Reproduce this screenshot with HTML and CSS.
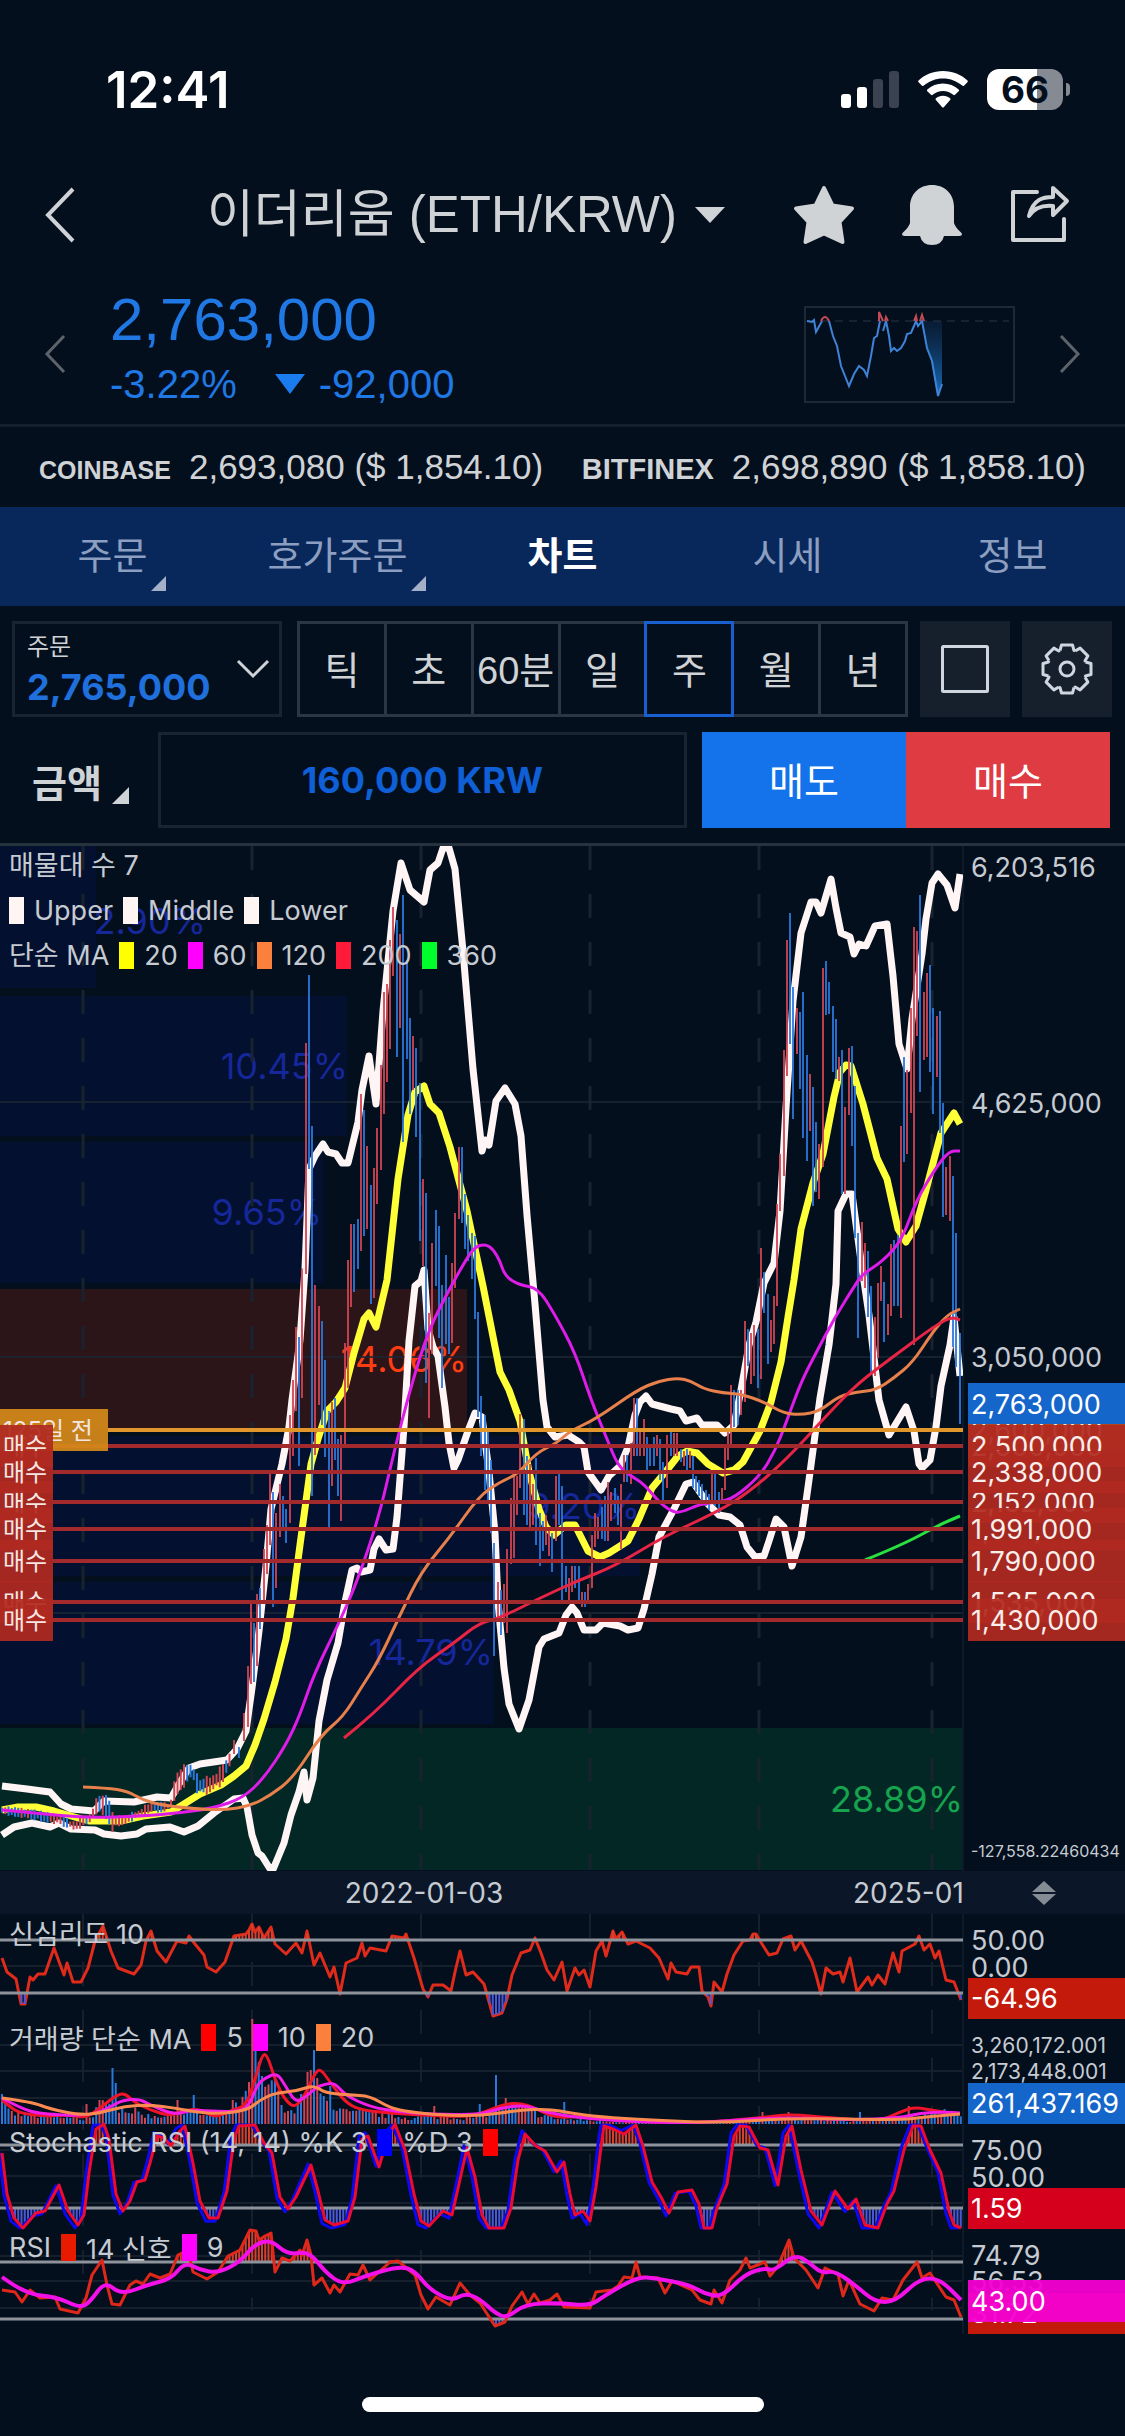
FILE: index.html
```html
<!DOCTYPE html>
<html lang="ko">
<head>
    <meta charset="UTF-8">
    <meta name="viewport" content="width=device-width, initial-scale=1.0">
    <title>이더리움 (ETH/KRW)</title>
    <link rel="stylesheet" href="styles.css">
</head>
<body>
    <div class="status-bar">
        <span class="clock">12:41</span>
        <div class="status-icons">
            <svg width="58" height="37" viewBox="0 0 58 37">
                <rect x="0" y="23" width="10" height="14" rx="3" fill="#fff"/>
                <rect x="16" y="16" width="10" height="21" rx="3" fill="#fff"/>
                <rect x="32" y="8" width="10" height="29" rx="3" fill="#3b4350"/>
                <rect x="48" y="0" width="10" height="37" rx="3" fill="#3b4350"/>
            </svg>
            <svg width="50" height="37" viewBox="0 0 50 37" fill="#fff">
                <path d="M25 0C15.500 0 6.500 3.700 .5 9.500Q-.2 10.400.6 11.300L4 14.700Q5 15.400 5.900 14.600C11 10 17.500 7.400 25 7.400S39 10 44.100 14.600Q45 15.400 46 14.700L49.400 11.300Q50.200 10.400 49.500 9.500C43.500 3.700 34.500 0 25 0Z"/>
                <path d="M25 12.500C19 12.500 13.500 14.800 9.300 18.400Q8.500 19.300 9.300 20.200L13 23.800Q13.900 24.500 14.800 23.800C17.600 21.400 21 19.900 25 19.900S32.400 21.400 35.200 23.800Q36.100 24.500 37 23.800L40.700 20.200Q41.500 19.300 40.700 18.400C36.500 14.800 31 12.500 25 12.500Z"/>
                <path d="M25 24.800C22.200 24.800 19.800 25.800 17.900 27.300Q17 28.200 17.900 29.100L24 35.900Q25 36.900 26 35.900L32.100 29.100Q33 28.200 32.100 27.300C30.200 25.800 27.800 24.800 25 24.800Z"/>
            </svg>
            <div class="battery">66</div>
        </div>
    </div>

    <header class="title-bar">
        <button class="icon-btn" aria-label="뒤로">
            <svg width="32" height="58" viewBox="0 0 32 58"><path d="M29 3L4 29L29 55" fill="none" stroke="#d0d3d6" stroke-width="4"/></svg>
        </button>
        <h1 class="pair">이더리움 (ETH/KRW)<svg width="30" height="16" viewBox="0 0 30 16"><path d="M0 0H30L15 16Z" fill="#d0d3d6"/></svg></h1>
        <div class="title-actions">
            <button class="icon-btn" aria-label="즐겨찾기">
                <svg width="62" height="60" viewBox="0 0 62 60"><path d="M31 3L39.500 20.500L59 23.500L46.500 37L49.500 57L31 48.500L12.500 57L15.500 37L3 23.500L22.500 20.500Z" fill="#d0d3d6" stroke="#d0d3d6" stroke-width="4" stroke-linejoin="round"/></svg>
            </button>
            <button class="icon-btn" aria-label="알림">
                <svg width="62" height="60" viewBox="0 0 62 60"><path d="M31 0C44 0 53 9 53 22V38Q54 42 60.500 48Q62 51 58 51H43Q41 60 31 60T19 51H4Q0 51 1.500 48Q8 42 9 38V22C9 9 18 0 31 0Z" fill="#d0d3d6"/></svg>
            </button>
            <button class="icon-btn" aria-label="공유">
                <svg width="62" height="60" viewBox="0 0 62 60" fill="none" stroke="#d0d3d6" stroke-width="4" stroke-linejoin="round" stroke-linecap="round"><path d="M28 7H4V55H55V34"/><path d="M20 31C24 14 34 12 44 12V3L58 16L44 30V21C34 20 26 22 20 31Z"/></svg>
            </button>
        </div>
    </header>

    <section class="quote">
        <button class="icon-btn" aria-label="이전">
            <svg width="22" height="40" viewBox="0 0 22 40"><path d="M20 2L3 20L20 38" fill="none" stroke="#5d636b" stroke-width="3"/></svg>
        </button>
        <div class="quote-text">
            <div class="price">2,763,000</div>
            <div class="change">
                <span>-3.22%</span>
                <svg width="30" height="20" viewBox="0 0 30 20"><path d="M0 0H30L15 20Z" fill="#1b7cf0"/></svg>
                <span>-92,000</span>
            </div>
        </div>
        <svg class="mini-chart" width="211" height="97" viewBox="0 0 211 97" fill="none">
            <defs>
                <linearGradient id="drop" x1="0" y1="0" x2="0" y2="1">
                    <stop offset="0" stop-color="#123a66" stop-opacity=".3"/>
                    <stop offset="1" stop-color="#1670c0"/>
                </linearGradient>
            </defs>
            <rect x="1" y="1" width="209" height="95" stroke="#1d2937" stroke-width="2"/>
            <path d="M3 15H205" stroke="#2a3643" stroke-width="1" stroke-dasharray="8 6"/>
            <path d="M118 15H138V78L134 90L128 56L123 44Z" fill="url(#drop)"/>
            <path d="M3 15L8 16L10 14L12 26L18 15M25 15L29 30L33 40L37 60L41 70L45 80L50 68L55 60L60 64L63 70L67 50L70 32L73 30L76 15M79 25L82 15L85 30L87 45L90 42L93 45L97 42L101 35L103 28L107 27L110 20L112 15L114 20L118 15L123 42L128 55L134 90L138 78" stroke="#3f83d6" stroke-width="2"/>
            <path d="M17 15Q21 7 25 15M75 15L75 6L79 15M81 15L82 11L84 15M110 15L112 10L113 15M116 15L118 9L120 15" stroke="#c14a55" stroke-width="2"/>
        </svg>
        <button class="icon-btn" aria-label="다음">
            <svg width="22" height="40" viewBox="0 0 22 40"><path d="M2 2L19 20L2 38" fill="none" stroke="#5d636b" stroke-width="3"/></svg>
        </button>
    </section>

    <section class="exchanges">
        <div class="exchange"><strong class="ex-small">COINBASE</strong><span>2,693,080 ($ 1,854.10)</span></div>
        <div class="exchange"><strong class="ex-large">BITFINEX</strong><span>2,698,890 ($ 1,858.10)</span></div>
    </section>

    <nav class="tabs">
        <a class="tab more" href="#order">주문</a>
        <a class="tab more" href="#book">호가주문</a>
        <a class="tab active" href="#chart">차트</a>
        <a class="tab" href="#market">시세</a>
        <a class="tab" href="#info">정보</a>
    </nav>

    <section class="controls">
        <div class="control-row">
            <div class="order-box">
                <div class="order-field">
                    <label for="order-price">주문</label>
                    <select id="order-price"><option>2,765,000</option></select>
                </div>
                <svg width="34" height="20" viewBox="0 0 34 20"><path d="M2 2L17 17L32 2" fill="none" stroke="#d0d3d6" stroke-width="3"/></svg>
            </div>
            <div class="periods">
                <button>틱</button>
                <button>초</button>
                <button>60분</button>
                <button>일</button>
                <button class="active">주</button>
                <button>월</button>
                <button>년</button>
            </div>
            <button class="tool-btn" aria-label="전체 화면">
                <svg width="48" height="48" viewBox="0 0 48 48"><rect x="1.500" y="1.500" width="45" height="45" rx="1" fill="none" stroke="#d0d6e0" stroke-width="3"/></svg>
            </button>
            <button class="tool-btn" aria-label="설정">
                <svg width="52" height="52" viewBox="-26 -26 52 52" fill="none" stroke="#d0d6e0" stroke-width="3" stroke-linejoin="round">
                    <defs><path id="tooth" d="M-7 -18.500L-5.500 -24H5.500L7 -18.500L8.100 -18"/></defs>
                    <use href="#tooth"/>
                    <use href="#tooth" transform="rotate(45)"/>
                    <use href="#tooth" transform="rotate(90)"/>
                    <use href="#tooth" transform="rotate(135)"/>
                    <use href="#tooth" transform="rotate(180)"/>
                    <use href="#tooth" transform="rotate(225)"/>
                    <use href="#tooth" transform="rotate(270)"/>
                    <use href="#tooth" transform="rotate(315)"/>
                    <circle r="7"/>
                </svg>
            </button>
        </div>
        <div class="control-row amount-row">
            <label class="amount-label" for="amount">금액</label>
            <input class="amount" id="amount" type="text" value="160,000 KRW">
            <div class="trade">
                <button class="sell">매도</button>
                <button class="buy">매수</button>
            </div>
        </div>
    </section>

    <main class="chart" id="chart">
        <svg class="chart-svg" viewBox="0 846 1125 1494">
            <defs>
                <clipPath id="plot"><rect x="0" y="846" width="963" height="1494"/></clipPath>
            </defs>

            <!-- volume profile -->
            <g id="profile">
                <rect x="0" y="846" width="96" height="142" fill="#03102f"/>
                <rect x="0" y="996" width="347" height="140" fill="#03102f"/>
                <rect x="0" y="1142" width="323" height="141" fill="#03102f"/>
                <rect x="0" y="1289" width="467" height="141" fill="#2b1519"/>
                <rect x="0" y="1436" width="640" height="140" fill="#03102f"/>
                <rect x="0" y="1582" width="494" height="142" fill="#03102f"/>
                <rect x="0" y="1728" width="963" height="142" fill="#032725"/>
            </g>
            <g class="profile-text">
                <text x="206" y="934">2.90%</text>
                <text x="348" y="1079">10.45%</text>
                <text x="322" y="1225">9.65%</text>
                <text x="467" y="1372" fill="#ff3d12">14.06%</text>
                <text x="640" y="1519">9.20%</text>
                <text x="493" y="1665">14.79%</text>
                <text x="963" y="1812" fill="#16a34e">28.89%</text>
            </g>

            <g id="grid"></g>
            <path d="M963 846V2334" stroke="#0e1a29" stroke-width="2"/>
            <g id="series" clip-path="url(#plot)"></g>
            <g id="orders"></g>

            <!-- price scale -->
            <g class="scale">
                <text x="971" y="877">6,203,516</text>
                <text x="971" y="1113">4,625,000</text>
                <text x="971" y="1367">3,050,000</text>
                <text x="971" y="1857" class="tiny">-127,558.22460434</text>
            </g>
            <rect x="968" y="1383" width="157" height="41" fill="#1566cb"/>
            <text x="971" y="1414" class="tag-text">2,763,000</text>

            <!-- date scale -->
            <rect x="0" y="1871" width="1125" height="43" fill="#0b1628"/>
            <g class="scale">
                <text x="424" y="1903" text-anchor="middle" class="date">2022-01-03</text>
                <text x="853" y="1903" class="date">2025-01</text>
            </g>
            <path d="M1044 1881L1056 1892H1032ZM1044 1905L1056 1894H1032Z" fill="#868c93"/>

            <g id="indicators" clip-path="url(#plot)"></g>

            <!-- indicator scales -->
            <g class="scale">
                <text x="971" y="1950">50.00</text>
                <text x="971" y="1977">0.00</text>
                <text x="971" y="2053" class="small">3,260,172.001</text>
                <text x="971" y="2079" class="small">2,173,448.001</text>
                <text x="971" y="2160">75.00</text>
                <text x="971" y="2187">50.00</text>
                <text x="971" y="2265">74.79</text>
                <text x="971" y="2291">56.53</text>
            </g>
            <rect x="968" y="1978" width="157" height="41" fill="#c41a0c"/>
            <rect x="968" y="2083" width="157" height="41" fill="#1566cb"/>
            <rect x="968" y="2188" width="157" height="41" fill="#d4001c"/>
            <rect x="968" y="2293" width="157" height="41" fill="#c41a0c"/>
            <text x="971" y="2323" class="tag-text">31.72</text>
            <rect x="968" y="2280" width="157" height="42" fill="#f400d2" fill-opacity=".95"/>
            <g class="tag-text">
                <text x="971" y="2008">-64.96</text>
                <text x="971" y="2113" class="medium">261,437.169</text>
                <text x="971" y="2218">1.59</text>
                <text x="971" y="2311">43.00</text>
            </g>
        </svg>

        <div class="legend main-legend">
            <div class="legend-row">매물대 수 7</div>
            <div class="legend-row">
                <i class="swatch white"></i>Upper
                <i class="swatch white"></i>Middle
                <i class="swatch white"></i>Lower
            </div>
            <div class="legend-row">
                단순 MA
                <i class="swatch yellow"></i>20
                <i class="swatch magenta"></i>60
                <i class="swatch orange"></i>120
                <i class="swatch crimson"></i>200
                <i class="swatch green"></i>360
            </div>
        </div>

        <div class="legend sub-legend">
            <div class="legend-row">신심리도 10</div>
            <div class="legend-row">
                거래량 단순 MA
                <i class="swatch red"></i>5
                <i class="swatch magenta"></i>10
                <i class="swatch orange"></i>20
            </div>
            <div class="legend-row">
                Stochastic RSI (14, 14) %K 3
                <i class="swatch blue"></i>%D 3
                <i class="swatch red"></i>
            </div>
            <div class="legend-row">
                RSI
                <i class="swatch brick"></i>14 신호
                <i class="swatch magenta"></i>9
            </div>
        </div>
    </main>

    <div class="home-indicator"></div>

    <script src="script.js"></script>
</body>
</html>
```
FILE: styles.css
```css
* {
    box-sizing: border-box;
}
body {
    margin: 0;
    background-color: #040f1e;
    color: #d0d3d6;
    font-family: "Liberation Sans", "Noto Sans CJK KR", sans-serif;
}
button,
select,
input {
    font-family: inherit;
    color: inherit;
    background: none;
    border: 0;
    border-radius: 0;
    padding: 0;
    margin: 0;
}
svg {
    display: block;
}
.icon-btn {
    display: block;
}

/* status bar */
.status-bar {
    height: 178px;
    padding: 0 56px 0 106px;
    display: flex;
    align-items: center;
    justify-content: space-between;
}
.clock {
    font-family: Inter, sans-serif;
    font-size: 51px;
    font-weight: 600;
    color: #fff;
}
.status-icons {
    display: flex;
    align-items: center;
    gap: 19px;
}
.battery {
    position: relative;
    width: 76px;
    height: 41px;
    margin-right: 6px;
    border-radius: 12px;
    background: linear-gradient(to right, #fff 66%, #868b93 66%);
    color: #040f1e;
    font-family: Inter, sans-serif;
    font-size: 37px;
    font-weight: 700;
    line-height: 41px;
    text-align: center;
}
.battery::after {
    content: "";
    position: absolute;
    right: -7px;
    top: 14px;
    width: 4px;
    height: 13px;
    border-radius: 0 4px 4px 0;
    background-color: #868b93;
}

/* title bar */
.title-bar {
    height: 74px;
    padding: 0 54px 0 44px;
    display: flex;
    align-items: center;
}
.pair {
    flex: 1;
    margin: 0 68px 0 0;
    display: flex;
    align-items: center;
    justify-content: flex-end;
    gap: 18px;
    font-size: 51px;
    font-weight: 400;
    line-height: 60px;
}
.title-actions {
    display: flex;
    gap: 46px;
}

/* quote */
.quote {
    padding: 32px 44px 0;
    display: flex;
    align-items: center;
    border-bottom: 3px solid #13202e;
}
.quote-text {
    flex: 1;
    padding: 0 0 16px 44px;
    color: #1f78e4;
}
.price {
    font-size: 60px;
    line-height: 72px;
}
.change {
    display: flex;
    align-items: center;
    margin-top: 4px;
    font-size: 40px;
    line-height: 48px;
}
.change svg {
    margin: 0 14px 0 38px;
}
.mini-chart {
    margin-right: 44px;
}

/* other exchanges */
.exchanges {
    height: 80px;
    padding: 0 39px;
    display: flex;
    align-items: center;
    justify-content: space-between;
}
.exchange {
    display: flex;
    align-items: baseline;
    gap: 18px;
    font-size: 35px;
}
.ex-small {
    font-size: 25px;
}
.ex-large {
    font-size: 29px;
}

/* tabs */
.tabs {
    display: flex;
    background-color: #08285c;
}
.tab {
    position: relative;
    flex: 1;
    height: 99px;
    line-height: 99px;
    text-align: center;
    font-size: 38px;
    color: #8d9fc0;
    text-decoration: none;
}
.tab.active {
    color: #fff;
    font-weight: 700;
}
.tab.more::after {
    content: "";
    position: absolute;
    top: 69px;
    margin-left: 4px;
    border-left: 15px solid transparent;
    border-bottom: 15px solid #a3b0c8;
}

/* controls */
.controls {
    padding: 15px 13px 15px 12px;
    display: flex;
    flex-direction: column;
    gap: 15px;
}
.control-row {
    display: flex;
    height: 96px;
}
.order-box {
    width: 270px;
    padding: 0 9px 0 12px;
    display: flex;
    align-items: center;
    justify-content: space-between;
    border: 3px solid #18242f;
}
.order-field {
    display: flex;
    flex-direction: column;
}
.order-field label {
    font-size: 24px;
    line-height: 36px;
}
.order-field select {
    appearance: none;
    font-family: Inter, sans-serif;
    font-size: 36px;
    font-weight: 700;
    line-height: 44px;
    color: #1f70dc;
}
.periods {
    flex: 1;
    display: flex;
    margin: 0 12px 0 15px;
    border: 3px solid #2b3644;
}
.periods button {
    flex: 1;
    padding-bottom: 4px;
    font-size: 38px;
    white-space: nowrap;
    border-left: 3px solid #2b3644;
}
.periods button:first-child {
    border-left: 0;
}
.periods .active {
    margin: -3px -3px -3px 0;
    border: 3px solid #1a5fd0;
    position: relative;
}
.tool-btn {
    width: 90px;
    background-color: #16202d;
    display: flex;
    align-items: center;
    justify-content: center;
}
.tool-btn + .tool-btn {
    margin-left: 12px;
}
.amount-row {
    align-items: stretch;
    padding-right: 2px;
}
.amount-label {
    width: 146px;
    padding-left: 20px;
    display: flex;
    align-items: center;
    font-size: 38px;
    font-weight: 700;
}
.amount-label::after {
    content: "";
    align-self: flex-end;
    margin: 0 0 24px 10px;
    border-left: 17px solid transparent;
    border-bottom: 17px solid #d0d3d6;
}
.amount {
    flex: 1;
    min-width: 0;
    border: 3px solid #18242f;
    text-align: center;
    font-family: Inter, sans-serif;
    font-size: 36px;
    font-weight: 700;
    color: #0f5fd6;
}
.trade {
    display: flex;
    width: 408px;
    margin-left: 15px;
}
.trade button {
    flex: 1;
    padding-bottom: 4px;
    font-size: 38px;
    color: #fff;
}
.sell {
    background-color: #1473eb;
}
.buy {
    background-color: #de3b43;
}

/* chart */
.chart {
    position: relative;
    border-top: 3px solid #27323f;
    font-family: Inter, "Noto Sans CJK KR", sans-serif;
}
.chart-svg {
    width: 100%;
    height: auto;
}
.profile-text text {
    font-size: 36px;
    text-anchor: end;
}
.profile-text {
    fill: #16279a;
}
.scale {
    font-size: 27px;
    fill: #c6cbd2;
}
.scale .tiny {
    font-size: 16px;
}
.scale .small {
    font-size: 21px;
}
.scale .date {
    font-size: 28px;
}
.tag-text {
    font-size: 27px;
    fill: #fff;
}
.tag-text .medium {
    font-size: 27px;
}
.legend {
    position: absolute;
    left: 9px;
    font-size: 27px;
    color: #c6cbd2;
}
.legend-row {
    display: flex;
    align-items: center;
    gap: 10px;
    white-space: nowrap;
}
.main-legend {
    top: -3px;
}
.main-legend .legend-row {
    height: 45px;
    line-height: 45px;
}
.sub-legend {
    bottom: 40px;
}
.sub-legend .legend-row {
    height: 105px;
}
.swatch {
    width: 15px;
    height: 27px;
}
.white { background-color: #fff5f3; }
.yellow { background-color: #ffff00; }
.magenta { background-color: #ff00ff; }
.orange { background-color: #fb803c; }
.crimson { background-color: #ff1a38; }
.green { background-color: #00ff2a; }
.red { background-color: #ff0000; }
.blue { background-color: #0000ff; }
.brick { background-color: #e81a00; }

.home-indicator {
    width: 402px;
    height: 15px;
    margin: 57px auto 24px;
    border-radius: 8px;
    background-color: #fff;
}
```
FILE: script.js
```javascript
const NS = 'http://www.w3.org/2000/svg';
const grid = document.getElementById('grid');
const series = document.getElementById('series');
const orders = document.getElementById('orders');
const indicators = document.getElementById('indicators');

const UP = '#cf4552';
const DOWN = '#2a78dc';

function add(parent, name, attrs, text) {
    const el = document.createElementNS(NS, name);
    for (const key in attrs) el.setAttribute(key, attrs[key]);
    if (text) el.textContent = text;
    parent.appendChild(el);
    return el;
}

function parse(str) {
    return str.trim().split(/\s+/).map(p => p.split(',').map(Number));
}

function line(parent, points, color, width) {
    add(parent, 'polyline', {
        points: points.map(p => p.join(',')).join(' '),
        fill: 'none', stroke: color, 'stroke-width': width, 'stroke-linejoin': 'round'
    });
}

// rounded curve through the midpoints, for the averages
function curve(parent, pts, color, width) {
    let d = 'M' + pts[0];
    for (let i = 1; i < pts.length - 1; i++) {
        const mx = (pts[i][0] + pts[i + 1][0]) / 2;
        const my = (pts[i][1] + pts[i + 1][1]) / 2;
        d += 'Q' + pts[i] + ' ' + mx + ',' + my;
    }
    d += 'L' + pts[pts.length - 1];
    add(parent, 'path', { d: d, fill: 'none', stroke: color, 'stroke-width': width });
}

function valueAt(pts, x) {
    for (let i = 1; i < pts.length; i++) {
        if (x <= pts[i][0]) {
            const [x0, y0] = pts[i - 1];
            const [x1, y1] = pts[i];
            return x1 === x0 ? y1 : y0 + (y1 - y0) * (x - x0) / (x1 - x0);
        }
    }
    return pts[pts.length - 1][1];
}

let seed = 7;
function rand() {
    seed = (seed * 16807) % 2147483647;
    return seed / 2147483647;
}

// ---- grid ----
[83, 252, 421, 590, 759, 932].forEach(x => {
    add(grid, 'path', { d: `M${x} 846V1870`, stroke: '#19232f', 'stroke-width': 3, 'stroke-dasharray': '24 24' });
    add(grid, 'path', { d: `M${x} 1914V2310`, stroke: '#16202d', 'stroke-width': 2, 'stroke-dasharray': '24 24' });
});
[1102, 1357, 1613].forEach(y => add(grid, 'path', { d: `M0 ${y}H963`, stroke: '#1b2533', 'stroke-opacity': .8, 'stroke-width': 2 }));
[1966, 2045, 2071, 2098, 2150, 2176, 2203, 2256, 2281, 2308].forEach(y => add(grid, 'path', { d: `M0 ${y}H963`, stroke: '#16202d', 'stroke-width': 2 }));

// ---- bollinger bands and averages ----
const upper = parse(`2,1786 27,1789 42,1791 50,1792 61,1804 71,1809 94,1811 104,1801 134,1802 157,1797 171,1798 179,1784 189,1768
    200,1764 227,1760 237,1749 246,1731 252,1688 259,1631 266,1566 271,1509 282,1464 289,1427 292,1400 300,1340 305,1269 309,1169
    315,1156 323,1144 328,1152 336,1154 342,1163 348,1163 358,1122 362,1090 369,1056 376,1104 383,1011 393,911 401,863 410,890 424,902
    430,870 438,863 443,848 449,848 455,869 463,951 473,1069 482,1151 485,1140 489,1145 496,1101 505,1088 515,1104 521,1136 527,1215
    535,1304 543,1400 547,1427 555,1437 568,1435 579,1442 584,1447 588,1472 601,1490 609,1476 620,1466 628,1447 635,1415 640,1402
    646,1396 652,1404 671,1409 680,1411 686,1421 697,1418 702,1425 717,1425 725,1433 734,1425 741,1390 749,1345 756,1322 764,1283
    774,1263 780,1211 786,1108 793,1001 801,933 811,902 816,902 821,913 831,879 836,908 841,933 850,937 854,954 859,944 866,946
    875,926 887,924 893,976 899,1044 907,1069 912,1019 922,954 926,919 932,883 938,874 947,885 955,908 960,874`);
const lower = parse(`2,1835 14,1827 32,1823 50,1827 59,1823 71,1829 95,1830 104,1834 121,1836 137,1834 146,1829 170,1827 184,1832
    198,1826 214,1813 234,1799 243,1798 247,1807 252,1835 258,1853 262,1856 272,1872 284,1843 291,1815 299,1792 304,1772 307,1800
    313,1778 319,1721 327,1680 338,1643 345,1602 352,1570 357,1568 361,1572 370,1570 374,1549 379,1539 386,1550 393,1549 397,1517
    404,1427 409,1341 415,1286 421,1281 424,1270 428,1329 433,1347 438,1356 445,1407 449,1443 454,1468 458,1460 468,1431 475,1413
    482,1417 489,1472 495,1533 498,1602 504,1668 509,1704 519,1729 529,1700 539,1647 544,1639 559,1633 566,1615 572,1607 577,1613
    584,1630 596,1630 603,1623 620,1626 628,1630 638,1628 644,1609 652,1574 659,1537 674,1509 686,1484 693,1482 708,1504 719,1515
    730,1517 740,1525 747,1547 755,1557 764,1556 769,1541 776,1519 784,1527 792,1566 801,1537 809,1480 820,1398 829,1345 836,1284
    838,1211 846,1194 852,1194 861,1261 869,1315 879,1400 889,1435 906,1407 914,1431 919,1464 922,1468 930,1460 936,1427 941,1386
    950,1345 954,1317 960,1376`);
const ma20 = parse(`2,1810 18,1807 36,1807 54,1811 71,1816 89,1821 121,1821 143,1816 171,1812 184,1804 200,1794 221,1785 234,1776
    246,1766 255,1745 264,1719 275,1682 286,1639 293,1598 300,1545 311,1464 318,1439 327,1411 336,1402 345,1388 354,1353 364,1319
    369,1313 376,1327 387,1280 398,1179 408,1115 415,1092 424,1086 430,1104 439,1113 450,1147 467,1211 483,1286 500,1372 509,1390
    520,1421 529,1472 539,1509 546,1527 554,1535 566,1525 575,1525 588,1551 600,1557 609,1553 628,1541 639,1519 652,1488 667,1470
    678,1456 687,1451 697,1453 708,1464 723,1473 734,1470 743,1462 760,1431 771,1402 781,1362 788,1317 794,1280 801,1229 813,1183
    823,1154 834,1097 840,1072 846,1065 851,1066 863,1104 877,1158 887,1179 898,1229 906,1242 916,1226 926,1190 941,1133 954,1113
    960,1124`);
const ma60 = parse(`2,1810 36,1813 86,1818 143,1816 179,1813 214,1808 243,1798 264,1778 286,1745 300,1715 314,1674 339,1623 357,1582
    379,1517 393,1456 411,1386 429,1329 450,1288 467,1258 475,1247 485,1244 493,1249 500,1261 505,1276 519,1285 538,1288 554,1313
    575,1352 591,1400 607,1439 618,1466 631,1476 644,1484 659,1502 671,1511 680,1513 700,1504 719,1502 734,1498 760,1476 775,1451
    786,1423 801,1382 816,1353 835,1317 857,1282 863,1274 883,1261 902,1240 916,1201 935,1169 949,1151 960,1151`);
const ma120 = parse(`83,1787 107,1788 127,1791 143,1800 161,1805 196,1809 225,1810 250,1806 271,1795 293,1778 321,1735 343,1717
    361,1688 379,1660 400,1615 421,1572 450,1537 479,1496 500,1482 518,1474 536,1453 557,1443 570,1431 596,1419 637,1390 659,1381
    678,1378 691,1381 704,1389 723,1393 741,1394 764,1402 783,1413 801,1415 820,1411 839,1396 857,1392 876,1390 894,1378 913,1362
    932,1333 947,1315 960,1309`);
const ma200 = parse(`344,1738 375,1713 418,1668 454,1643 479,1623 500,1618 540,1598 577,1581 615,1566 663,1537 719,1511 749,1492
    786,1460 827,1415 857,1384 894,1356 936,1325 952,1317 960,1320`);
const ma360 = parse('865,1560 902,1545 939,1525 960,1516');

line(series, upper, '#fff5f5', 7);
line(series, lower, '#fff5f5', 7);
line(series, ma20, '#ffff38', 7);

// ---- candles: r/b, x, high, low ----
const candles = `r234,1740,1754 b239,1747,1758 r244,1713,1741 r248,1666,1727 r251,1602,1684 b254,1623,1682 r257,1594,1666 b260,1588,1629
    r264,1549,1604 r267,1525,1574 r270,1474,1545 b273,1492,1607 r276,1513,1588 r280,1484,1537 b283,1496,1531 b286,1509,1543
    r290,1415,1523 r293,1380,1456 r296,1327,1411 b299,1337,1466 r302,1269,1398 r306,1043,1274 b309,975,1169 b312,1126,1496
    r315,1285,1455 r319,1306,1405 b322,1321,1425 b325,1360,1457 b329,1411,1527 r332,1402,1486 b335,1398,1460 b338,1439,1496
    r341,1435,1521 r345,1343,1447 r348,1260,1388 r351,1224,1307 b354,1224,1292 b358,1219,1269 r361,1094,1251 b364,1110,1236
    r367,1146,1229 b371,1185,1304 r374,1168,1298 r377,1128,1204 r381,1065,1170 r384,992,1114 r387,984,1082 r390,940,1049
    r393,907,976 b397,920,1057 r400,934,1028 b403,895,1142 b407,960,1059 b410,1018,1114 r413,1036,1090 b416,1048,1137
    b420,1083,1241 r423,1179,1266 b426,1193,1383 r429,1313,1418 r432,1243,1354 b436,1210,1286 b439,1226,1338 b442,1285,1388
    b446,1255,1344 b449,1297,1354 r452,1263,1343 r455,1213,1288 r459,1147,1219 b462,1147,1223 b465,1194,1249 b468,1215,1261
    b472,1233,1279 b475,1236,1319 b478,1312,1417 b481,1396,1456 b485,1415,1490 b488,1431,1500 b491,1460,1533 b494,1543,1656
    r498,1582,1621 b501,1590,1635 r504,1584,1623 r507,1549,1633 r511,1498,1564 r514,1472,1558 r517,1476,1515 r520,1414,1488
    b524,1419,1515 b527,1456,1525 r530,1464,1531 r533,1484,1525 b536,1458,1545 b540,1513,1566 b543,1521,1551 r546,1515,1545
    r549,1527,1556 b552,1533,1572 r556,1476,1541 b559,1474,1525 b562,1486,1600 b566,1566,1592 r569,1578,1600 r572,1566,1592
    b575,1566,1588 b579,1566,1600 r582,1592,1607 b585,1592,1607 r588,1584,1600 r592,1535,1588 r595,1513,1547 r598,1517,1539
    b602,1507,1539 b605,1496,1541 r608,1482,1541 r611,1492,1521 b615,1488,1513 b618,1496,1525 r621,1484,1549 r624,1455,1482
    b627,1455,1482 r631,1443,1484 r634,1398,1456 b637,1398,1456 r640,1430,1456 r644,1419,1456 b647,1437,1470 b650,1445,1466
    b654,1437,1466 r657,1435,1456 b660,1439,1480 b663,1462,1500 r667,1435,1488 b671,1431,1456 r674,1433,1456 r677,1433,1456
    b681,1449,1462 r684,1451,1466 b687,1449,1470 r690,1451,1468 b693,1456,1488 b696,1476,1492 b699,1480,1496 b702,1484,1500
    b706,1490,1506 b709,1494,1510 r712,1474,1502 b715,1474,1506 b719,1492,1513 r722,1488,1504 r725,1447,1490 r728,1431,1460
    r731,1385,1445 b734,1390,1427 b738,1390,1425 r741,1390,1415 r745,1321,1402 b748,1329,1366 r751,1333,1384 r754,1325,1376
    b758,1329,1388 r761,1248,1379 b764,1272,1313 b768,1294,1364 r771,1320,1352 r774,1296,1344 r777,1204,1306 r780,1154,1211
    r784,1050,1176 r787,940,1076 b790,913,1044 b793,987,1119 r797,1008,1054 b800,1012,1089 b803,992,1138 b807,1055,1161
    r810,1074,1131 b813,1087,1206 b816,1122,1192 r819,1144,1199 r823,968,1167 b826,961,1015 b829,982,1014 b833,1006,1072
    b836,1019,1079 r839,1057,1081 b842,1050,1194 r845,1107,1194 r849,1048,1115 b852,1046,1146 b855,1086,1238 b858,1233,1338
    r862,1222,1281 r865,1243,1288 b868,1251,1317 b871,1286,1372 r875,1317,1376 r878,1283,1358 r881,1266,1301 b884,1282,1342
    r888,1304,1335 r891,1244,1316 b894,1240,1306 b898,1235,1306 r901,1126,1318 b904,1057,1162 r907,1070,1154 r911,1008,1113
    r914,927,1345 r917,931,1036 b920,895,1092 r924,992,1060 r927,973,1057 b930,965,1072 b933,1008,1114 r937,1016,1077
    b940,1011,1133 b943,1103,1217 r946,1167,1215 r950,1156,1221 b953,1176,1347 b956,1233,1367 b960,1333,1424`;

const early = parse('0,1810 30,1814 60,1820 75,1826 90,1818 98,1803 108,1808 112,1822 125,1820 150,1808 170,1806 176,1785 185,1775 192,1770 198,1786 210,1785 222,1775 232,1755');
for (let x = 2; x < 232; x += 3.25) {
    const y = valueAt(early, x);
    const h = (x > 172 || (x > 94 && x < 114) ? 9 : 4) * (0.6 + rand() * 0.8);
    const rising = valueAt(early, x + 4) < y;
    const color = rand() < (rising ? 0.85 : 0.35) ? UP : DOWN;
    add(series, 'path', { d: `M${x} ${y - h}V${y + h}`, stroke: color, 'stroke-width': 2 });
}
candles.trim().split(/\s+/).forEach(c => {
    const [x, high, low] = c.slice(1).split(',').map(Number);
    add(series, 'path', { d: `M${x} ${high}V${low}`, stroke: c[0] === 'r' ? UP : DOWN, 'stroke-width': 2, 'stroke-opacity': .9 });
});

curve(series, ma60, '#dd1ce8', 3);
curve(series, ma120, '#e8804c', 3);
curve(series, ma200, '#e82444', 3);
curve(series, ma360, '#28e040', 3);

// ---- open orders ----
const ORANGE = '#d4891a';
const RED = '#b02a20';
const orderList = [
    { y: 1430, price: '2,600,000', label: '125일 전', width: 108, left: ORANGE, right: '#c04a1c', line: '#e0962a' },
    { y: 1502, price: '2,152,000' },
    { y: 1602, price: '1,535,000' },
    { y: 1446, price: '2,500,000' },
    { y: 1472, price: '2,338,000' },
    { y: 1529, price: '1,991,000' },
    { y: 1561, price: '1,790,000' },
    { y: 1620, price: '1,430,000' }
];
orderList.forEach(o => {
    add(orders, 'path', { d: `M${o.width || 53} ${o.y}H963`, stroke: o.line || '#a32a2c', 'stroke-width': 4 });
});
orderList.forEach(o => {
    add(orders, 'rect', { x: 0, y: o.y - 21, width: o.width || 53, height: 42, fill: o.left || RED, 'fill-opacity': .93 });
    add(orders, 'text', { x: 3, y: o.y + 9, 'font-size': 24, fill: '#f5e6e3' }, o.label || '매수');
    add(orders, 'rect', { x: 968, y: o.y - 21, width: 157, height: 42, fill: o.right || RED, 'fill-opacity': .93 });
    add(orders, 'text', { x: 971, y: o.y + 10, 'font-size': 27, fill: '#f8efec' }, o.price);
});

// ---- indicator panes ----
function level(y) {
    add(indicators, 'path', { d: `M0 ${y}H963`, stroke: '#8e939b', 'stroke-width': 3 });
}
// thin bars between a curve and its threshold lines
function hatch(pts, high, low) {
    for (let x = 2; x < 962; x += 3.25) {
        const y = valueAt(pts, x);
        if (y < high) add(indicators, 'path', { d: `M${x} ${y}V${high}`, stroke: '#d8402c', 'stroke-width': 2 });
        if (y > low) add(indicators, 'path', { d: `M${x} ${low}V${y}`, stroke: '#4858d8', 'stroke-width': 2 });
    }
}

const psych = parse(`2,1958 7,1972 16,1979 21,2004 25,2004 30,1977 33,1980 38,1974 45,1974 54,1948 64,1975 67,1963 73,1982 81,1982 88,1968
    95,1941 103,1926 111,1951 118,1968 134,1974 141,1965 146,1941 151,1931 157,1951 166,1962 177,1941 186,1943 189,1936 195,1944
    204,1955 207,1967 216,1972 225,1962 234,1936 246,1934 249,1930 252,1924 255,1932 259,1927 264,1938 271,1927 275,1944 286,1954
    296,1943 302,1953 307,1931 314,1965 320,1953 330,1977 334,1967 340,1994 346,1963 357,1958 362,1943 365,1956 370,1948 386,1951
    392,1936 404,1938 406,1934 414,1958 423,1989 428,1997 433,1985 443,1985 451,1991 455,1972 460,1951 466,1975 473,1972 484,1984
    493,2016 502,2013 507,1999 512,1975 521,1953 530,1950 535,1938 541,1953 547,1970 554,1980 562,1962 567,1991 575,1968 579,1975
    584,1970 590,1987 596,1951 602,1941 606,1956 613,1931 616,1939 622,1932 628,1944 636,1941 650,1948 659,1958 668,1979 671,1963
    676,1972 687,1974 691,1967 699,1967 702,1991 708,1997 711,2006 714,1982 722,1992 727,1974 734,1955 743,1941 750,1940 753,1934
    756,1934 762,1944 769,1955 777,1953 783,1939 791,1936 795,1950 801,1941 812,1962 816,1975 821,1994 826,1968 833,1974 840,1972
    843,1982 850,1958 857,1992 868,1977 872,1985 878,1975 885,1984 893,1953 899,1972 902,1951 915,1944 919,1936 924,1950 930,1944
    935,1958 939,1951 946,1980 954,1982 961,2000`);
line(indicators, psych, '#e02a1a', 3);
hatch(psych, 1940, 1993);
level(1940);
level(1993);

// volume
const volume = parse(`0,2098 8,2112 40,2116 75,2118 88,2120 100,2105 112,2106 125,2108 150,2116 175,2114 190,2110 215,2118 235,2108
    248,2095 262,2078 275,2092 290,2112 300,2106 312,2082 325,2100 345,2112 380,2114 410,2118 430,2116 470,2118 490,2112 505,2104
    520,2108 540,2114 560,2119 600,2121 700,2123 750,2120 790,2118 850,2121 900,2119 920,2112 940,2115 962,2114`);
const spikes = {
    2: 'b2094', 86: 'r2104', 99: 'r2100', 112: 'b2068', 115: 'b2083', 177: 'r2100', 194: 'b2095', 232: 'r2100', 249: 'r2082', 252: 'r2019', 255: 'b2050',
    258: 'b2062', 262: 'b2076', 275: 'b2080', 300: 'b2094', 307: 'r2072', 310: 'r2070', 314: 'b2050', 317: 'r2078', 330: 'b2086', 433: 'r2106', 480: 'b2104',
    496: 'b2075', 505: 'r2098', 564: 'b2102', 762: 'r2112', 787: 'r2112', 859: 'b2112', 909: 'r2106', 945: 'b2109'
};
for (let i = 0; i < 296; i++) {
    const x = 2 + i * 3.25;
    let top = 2124 - (2124 - valueAt(volume, x)) * (0.6 + rand() * 0.7);
    let color = rand() < 0.5 ? UP : DOWN;
    for (const key in spikes) {
        if (Math.abs(key - x) < 1.7) {
            color = spikes[key][0] === 'r' ? UP : DOWN;
            top = Number(spikes[key].slice(1));
        }
    }
    add(indicators, 'path', { d: `M${x} ${top}V2124`, stroke: color, 'stroke-width': 2 });
}
curve(indicators, parse(`2,2100 10,2107 20,2113 40,2116 70,2115 86,2118 100,2108 118,2094 126,2094 134,2102 150,2110 170,2116 185,2110
    200,2109 215,2118 232,2110 246,2106 255,2080 262,2055 267,2054 275,2080 285,2100 295,2108 305,2095 314,2075 320,2068 330,2082
    345,2102 360,2110 390,2113 420,2115 470,2117 490,2110 505,2104 520,2103 535,2108 555,2118 580,2116 620,2121 700,2123 760,2118
    790,2114 830,2118 880,2121 900,2112 915,2107 935,2111 960,2114`), '#f01428', 3);
curve(indicators, parse(`2,2098 20,2108 40,2114 90,2116 110,2107 123,2100 140,2099 150,2105 175,2115 190,2110 210,2111 240,2112
    250,2104 257,2085 265,2078 277,2073 285,2085 295,2102 305,2098 315,2088 325,2084 335,2083 345,2095 370,2107 400,2112 430,2114
    480,2115 500,2108 525,2105 545,2112 580,2118 640,2122 700,2123 780,2117 850,2120 900,2118 920,2113 945,2112 960,2113`), '#f41ce8', 3);
curve(indicators, parse(`2,2098 32,2102 50,2109 80,2115 100,2113 125,2106 150,2105 175,2108 195,2112 220,2114 248,2110 260,2100
    275,2093 297,2091 314,2085 325,2093 350,2095 370,2096 390,2108 410,2112 440,2115 480,2116 520,2110 550,2109 570,2113 600,2117
    650,2120 720,2123 790,2118 900,2120 925,2117 960,2114`), '#fb8a50', 3);

// stochastic rsi
const stoch = parse(`2,2153 7,2194 14,2218 23,2228 36,2213 45,2211 59,2185 68,2211 78,2225 84,2215 89,2173 96,2129 104,2124 109,2139
    116,2194 123,2211 130,2201 137,2182 145,2180 150,2163 157,2136 164,2138 171,2146 179,2132 185,2126 193,2163 200,2201 209,2218
    218,2218 227,2191 234,2139 239,2126 255,2125 264,2143 272,2153 280,2197 288,2209 296,2197 311,2165 318,2191 325,2220 334,2225
    348,2221 355,2197 362,2139 368,2136 379,2167 388,2136 395,2124 405,2150 414,2194 421,2221 429,2226 443,2211 452,2215 459,2184
    467,2148 475,2177 482,2215 489,2228 504,2228 511,2208 518,2160 525,2134 536,2146 545,2151 557,2172 564,2162 570,2194 575,2215
    583,2211 590,2221 596,2187 602,2139 604,2126 613,2129 624,2134 636,2125 643,2146 652,2182 661,2197 669,2213 678,2192 692,2190
    699,2204 704,2228 712,2228 717,2208 727,2184 734,2136 740,2126 749,2127 760,2148 768,2150 778,2185 786,2136 792,2126 801,2170
    811,2211 822,2225 835,2191 848,2209 856,2199 865,2225 878,2228 887,2204 894,2191 904,2150 913,2126 921,2126 930,2150 941,2173
    949,2211 954,2225 961,2228`);
const fast = stoch.map(([x, y]) => [x - 3, Math.max(2125, Math.min(2228, 2176 + (y - 2176) * 1.08))]);
hatch(stoch, 2145, 2208);
level(2145);
level(2208);
line(indicators, fast, '#0c08f0', 3);
line(indicators, stoch, '#ee0a30', 3);

// rsi
const rsi = parse(`2,2290 15,2292 22,2302 30,2290 40,2298 55,2297 60,2309 78,2313 86,2298 92,2275 102,2260 107,2285 112,2304 120,2305
    130,2285 136,2281 143,2284 150,2274 160,2278 170,2274 178,2255 188,2250 193,2272 207,2279 218,2272 228,2256 240,2250 250,2230
    256,2231 259,2240 265,2236 271,2233 275,2272 282,2258 290,2261 300,2250 302,2255 307,2240 311,2255 314,2285 322,2278 330,2293
    334,2285 340,2292 350,2274 358,2275 363,2265 370,2280 390,2262 398,2261 415,2275 421,2295 428,2309 436,2297 450,2305 460,2283
    470,2295 480,2303 495,2326 505,2322 512,2306 522,2292 528,2304 534,2294 540,2303 550,2300 557,2294 564,2307 590,2308 596,2292
    612,2290 618,2286 624,2277 632,2278 636,2262 640,2277 658,2278 665,2293 672,2281 692,2290 700,2300 711,2304 714,2290 722,2303
    730,2280 740,2270 746,2258 750,2268 765,2262 770,2276 778,2266 789,2240 794,2258 806,2270 818,2288 825,2268 838,2274 843,2296
    849,2280 860,2304 874,2311 882,2298 893,2300 903,2280 917,2262 922,2278 930,2273 946,2297 954,2300 961,2317`);
const signal = parse(`2,2277 25,2294 57,2297 80,2308 90,2302 105,2281 121,2295 150,2284 171,2279 185,2262 200,2270 218,2273 240,2262
    255,2244 271,2240 288,2255 309,2251 325,2272 343,2285 365,2276 400,2266 415,2271 430,2290 452,2301 465,2293 480,2299 495,2313
    507,2318 525,2304 560,2303 590,2306 604,2296 637,2277 655,2278 690,2285 705,2294 722,2297 745,2274 765,2268 774,2271 795,2254
    810,2263 821,2273 835,2271 855,2285 875,2302 895,2302 920,2278 940,2279 961,2300`);
hatch(rsi, 2262, 2319);
level(2262);
level(2319);
line(indicators, rsi, '#e0281a', 3);
curve(indicators, signal, '#f410e8', 4);
```
